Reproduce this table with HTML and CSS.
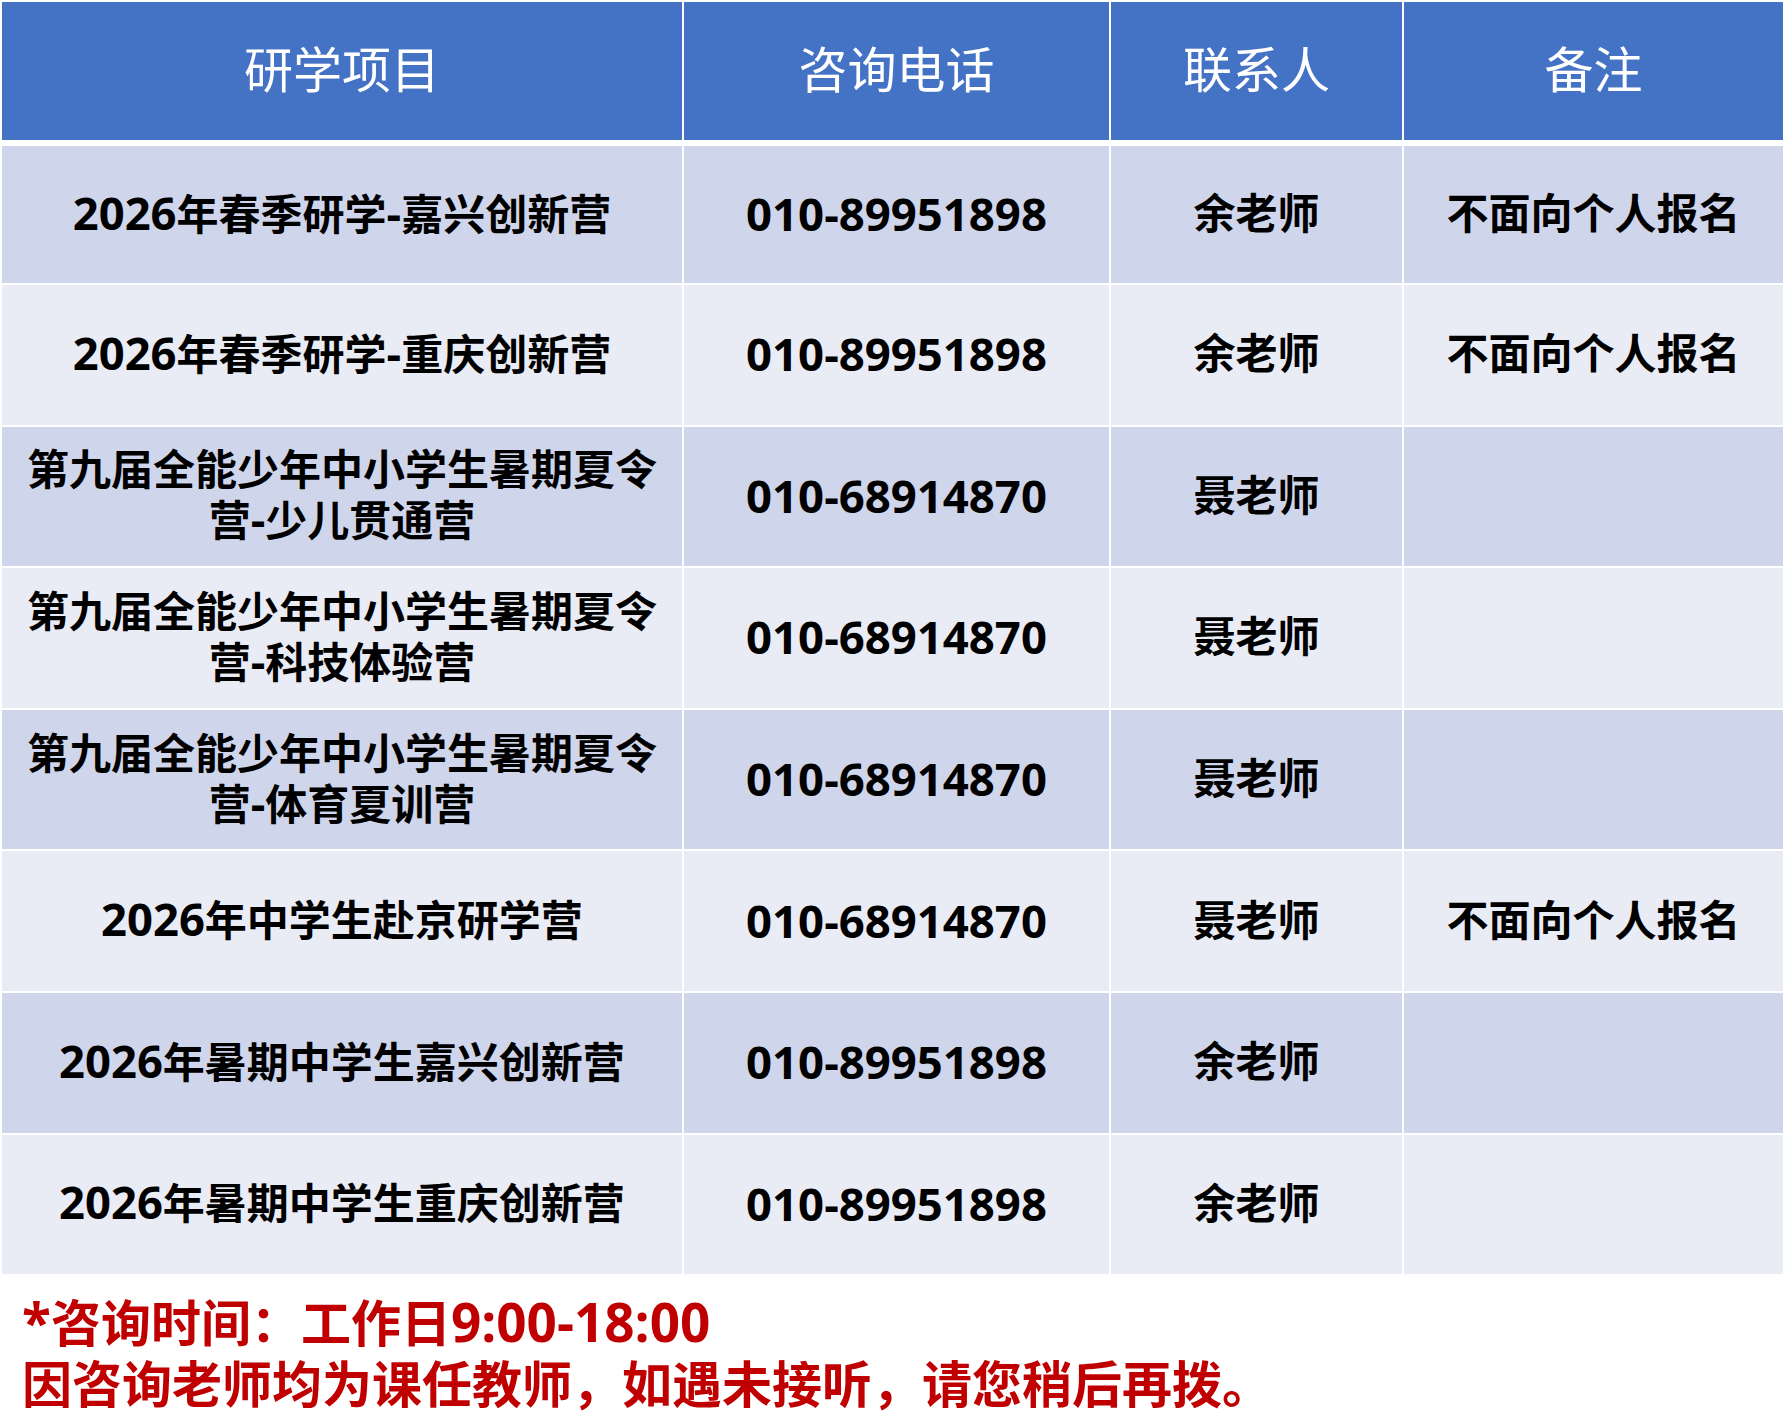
FILE: index.html
```html
<!DOCTYPE html>
<html lang="zh-CN">
<head>
<meta charset="utf-8">
<title>研学项目咨询电话</title>
<link rel="stylesheet" href="styles.css">
</head>
<body>
<div class="sheet">
  <div class="table">
    <div class="row head">
      <div class="cell">研学项目</div>
      <div class="cell">咨询电话</div>
      <div class="cell">联系人</div>
      <div class="cell">备注</div>
    </div>
    <div class="rows">
      <div class="row">
        <div class="cell"><span class="txt"><span class="latin">2026</span>年春季研学<span class="latin">-</span>嘉兴创新营</span></div>
        <div class="cell phone">010-89951898</div>
        <div class="cell">余老师</div>
        <div class="cell">不面向个人报名</div>
      </div>
      <div class="row">
        <div class="cell"><span class="txt"><span class="latin">2026</span>年春季研学<span class="latin">-</span>重庆创新营</span></div>
        <div class="cell phone">010-89951898</div>
        <div class="cell">余老师</div>
        <div class="cell">不面向个人报名</div>
      </div>
      <div class="row">
        <div class="cell"><span class="txt">第九届全能少年中小学生暑期夏令<br>营<span class="latin">-</span>少儿贯通营</span></div>
        <div class="cell phone">010-68914870</div>
        <div class="cell">聂老师</div>
        <div class="cell"></div>
      </div>
      <div class="row">
        <div class="cell"><span class="txt">第九届全能少年中小学生暑期夏令<br>营<span class="latin">-</span>科技体验营</span></div>
        <div class="cell phone">010-68914870</div>
        <div class="cell">聂老师</div>
        <div class="cell"></div>
      </div>
      <div class="row">
        <div class="cell"><span class="txt">第九届全能少年中小学生暑期夏令<br>营<span class="latin">-</span>体育夏训营</span></div>
        <div class="cell phone">010-68914870</div>
        <div class="cell">聂老师</div>
        <div class="cell"></div>
      </div>
      <div class="row">
        <div class="cell"><span class="txt"><span class="latin">2026</span>年中学生赴京研学营</span></div>
        <div class="cell phone">010-68914870</div>
        <div class="cell">聂老师</div>
        <div class="cell">不面向个人报名</div>
      </div>
      <div class="row">
        <div class="cell"><span class="txt"><span class="latin">2026</span>年暑期中学生嘉兴创新营</span></div>
        <div class="cell phone">010-89951898</div>
        <div class="cell">余老师</div>
        <div class="cell"></div>
      </div>
      <div class="row">
        <div class="cell"><span class="txt"><span class="latin">2026</span>年暑期中学生重庆创新营</span></div>
        <div class="cell phone">010-89951898</div>
        <div class="cell">余老师</div>
        <div class="cell"></div>
      </div>
    </div>
  </div>
  <div class="notice">
    <p><span class="latin">*</span>咨询时间：工作日<span class="latin">9:00-18:00</span></p>
    <p>因咨询老师均为课任教师，如遇未接听，请您稍后再拨。</p>
  </div>
</div>
</body>
</html>
```
FILE: styles.css
```css
html, body {
  margin: 0;
  padding: 0;
  background: #ffffff;
}

body {
  font-family: "Open Sans", "Noto Sans CJK SC", sans-serif;
  color: #000000;
}

.sheet {
  width: 1785px;
}

.table {
  padding: 2px 2px 0 2px;
  display: flex;
  flex-direction: column;
  gap: 6px;
}

.rows {
  display: flex;
  flex-direction: column;
  gap: 2px;
}

.row {
  display: grid;
  grid-template-columns: 680px 425px 291px 379px;
  column-gap: 2px;
  height: 139.6px;
}

.rows .row:first-child {
  height: 137px;
}

.rows .row:nth-child(odd) .cell {
  background: #cfd5ea;
}

.rows .row:nth-child(even) .cell {
  background: #e9ebf5;
}

.cell {
  display: flex;
  align-items: center;
  justify-content: center;
  text-align: center;
  font-size: 42px;
  font-weight: 700;
  line-height: 50px;
  padding-bottom: 3px;
  box-sizing: border-box;
}

.txt {
  display: block;
}

.latin {
  font-size: 1.08em;
}

.cell.phone {
  font-size: 45.5px;
}

.head {
  height: 138px;
}

.head .cell {
  background: #4472c4;
  color: #ffffff;
  font-weight: 400;
  font-size: 49px;
  padding-bottom: 4px;
}

.notice {
  padding: 17px 0 0 22px;
  color: #c00000;
  font-weight: 700;
  font-size: 50px;
  line-height: 61px;
}

.notice .latin {
  font-size: 1.06em;
}

.notice p {
  margin: 0;
  white-space: nowrap;
}
```
